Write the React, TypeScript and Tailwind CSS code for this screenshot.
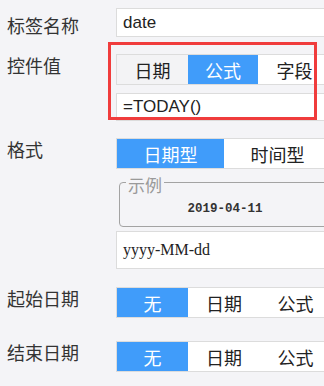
const cjk = "font-['Microsoft_YaHei','Noto_Sans_CJK_SC',sans-serif]";

function Tabs({ items, active, widths, dimFirst }: { items: string[]; active: number; widths: number[]; dimFirst?: boolean }) {
  return (
    <div className="flex h-[31px] border border-[#dcdcdc] bg-white w-[216px] shrink-0">
      {items.map((t, i) => (
        <div
          key={t}
          style={{ width: widths[i] }}
          className={
            "flex items-center justify-center text-[18px] leading-[24px] shrink-0 " +
            (i === active
              ? "bg-[#409cfa] text-white"
              : dimFirst && i === 0
              ? "bg-[#f3f3f5] text-[#222]"
              : "text-[#222]")
          }
        >
          {t}
        </div>
      ))}
    </div>
  );
}

function Label({ text, className }: { text: string; className: string }) {
  return <div className={"w-[116px] shrink-0 pl-[7px] text-[18px] leading-[24px] text-[#333] " + className}>{text}</div>;
}

export default function App() {
  return (
    <div className={"relative w-[324px] h-[386px] overflow-hidden bg-[#f4f4f7] " + cjk}>
      <div className="flex flex-col">
        <div className="flex mt-[8px]">
          <Label text="标签名称" className="mt-[5px]" />
          <div className="h-[29px] w-[216px] shrink-0 border border-[#dcdcdc] bg-white pl-[6px] text-[17px] leading-[27px] text-[#222] font-['Liberation_Sans',sans-serif]">
            date
          </div>
        </div>

        <div className="flex mt-[17px]">
          <Label text="控件值" className="-mt-[1px]" />
          <div className="flex flex-col gap-[8px]">
            <Tabs items={["日期", "公式", "字段"]} active={1} widths={[71, 70, 73]} dimFirst />
            <div className="h-[28px] w-[216px] border border-[#dcdcdc] bg-white pl-[6px] text-[17px] leading-[26px] text-[#222] font-['Liberation_Sans',sans-serif]">
              =TODAY()
            </div>
          </div>
        </div>

        <div className="flex mt-[17px]">
          <Label text="格式" className="-mt-[1px]" />
          <div className="flex flex-col">
            <Tabs items={["日期型", "时间型"]} active={0} widths={[107, 107]} />
            <fieldset className="mt-[3px] ml-[3px] w-[212px] border border-[#a3a3a3] rounded-[4px]">
              <legend className="ml-[6px] px-[2px] pt-[6px] text-[17px] leading-[14px] text-[#9a9a9a]">示例</legend>
              <div className="h-[34px] flex items-center justify-center text-[12.5px] font-bold text-[#333] font-['Liberation_Mono',monospace]">
                2019-04-11
              </div>
            </fieldset>
            <div className="mt-[4px] h-[38px] w-[216px] border border-[#dcdcdc] bg-white pl-[6px] text-[16px] leading-[36px] text-[#222] font-['Liberation_Serif',serif]">
              yyyy-MM-dd
            </div>
          </div>
        </div>

        <div className="flex mt-[18px]">
          <Label text="起始日期" className="-mt-[1px]" />
          <Tabs items={["无", "日期", "公式"]} active={0} widths={[71, 72, 71]} />
        </div>

        <div className="flex mt-[23px]">
          <Label text="结束日期" className="-mt-[1px]" />
          <Tabs items={["无", "日期", "公式"]} active={0} widths={[71, 72, 71]} />
        </div>
      </div>

      <div className="absolute left-[108px] top-[42px] w-[209px] h-[78px] border-[3px] border-[#f03c3c]" />
    </div>
  );
}
